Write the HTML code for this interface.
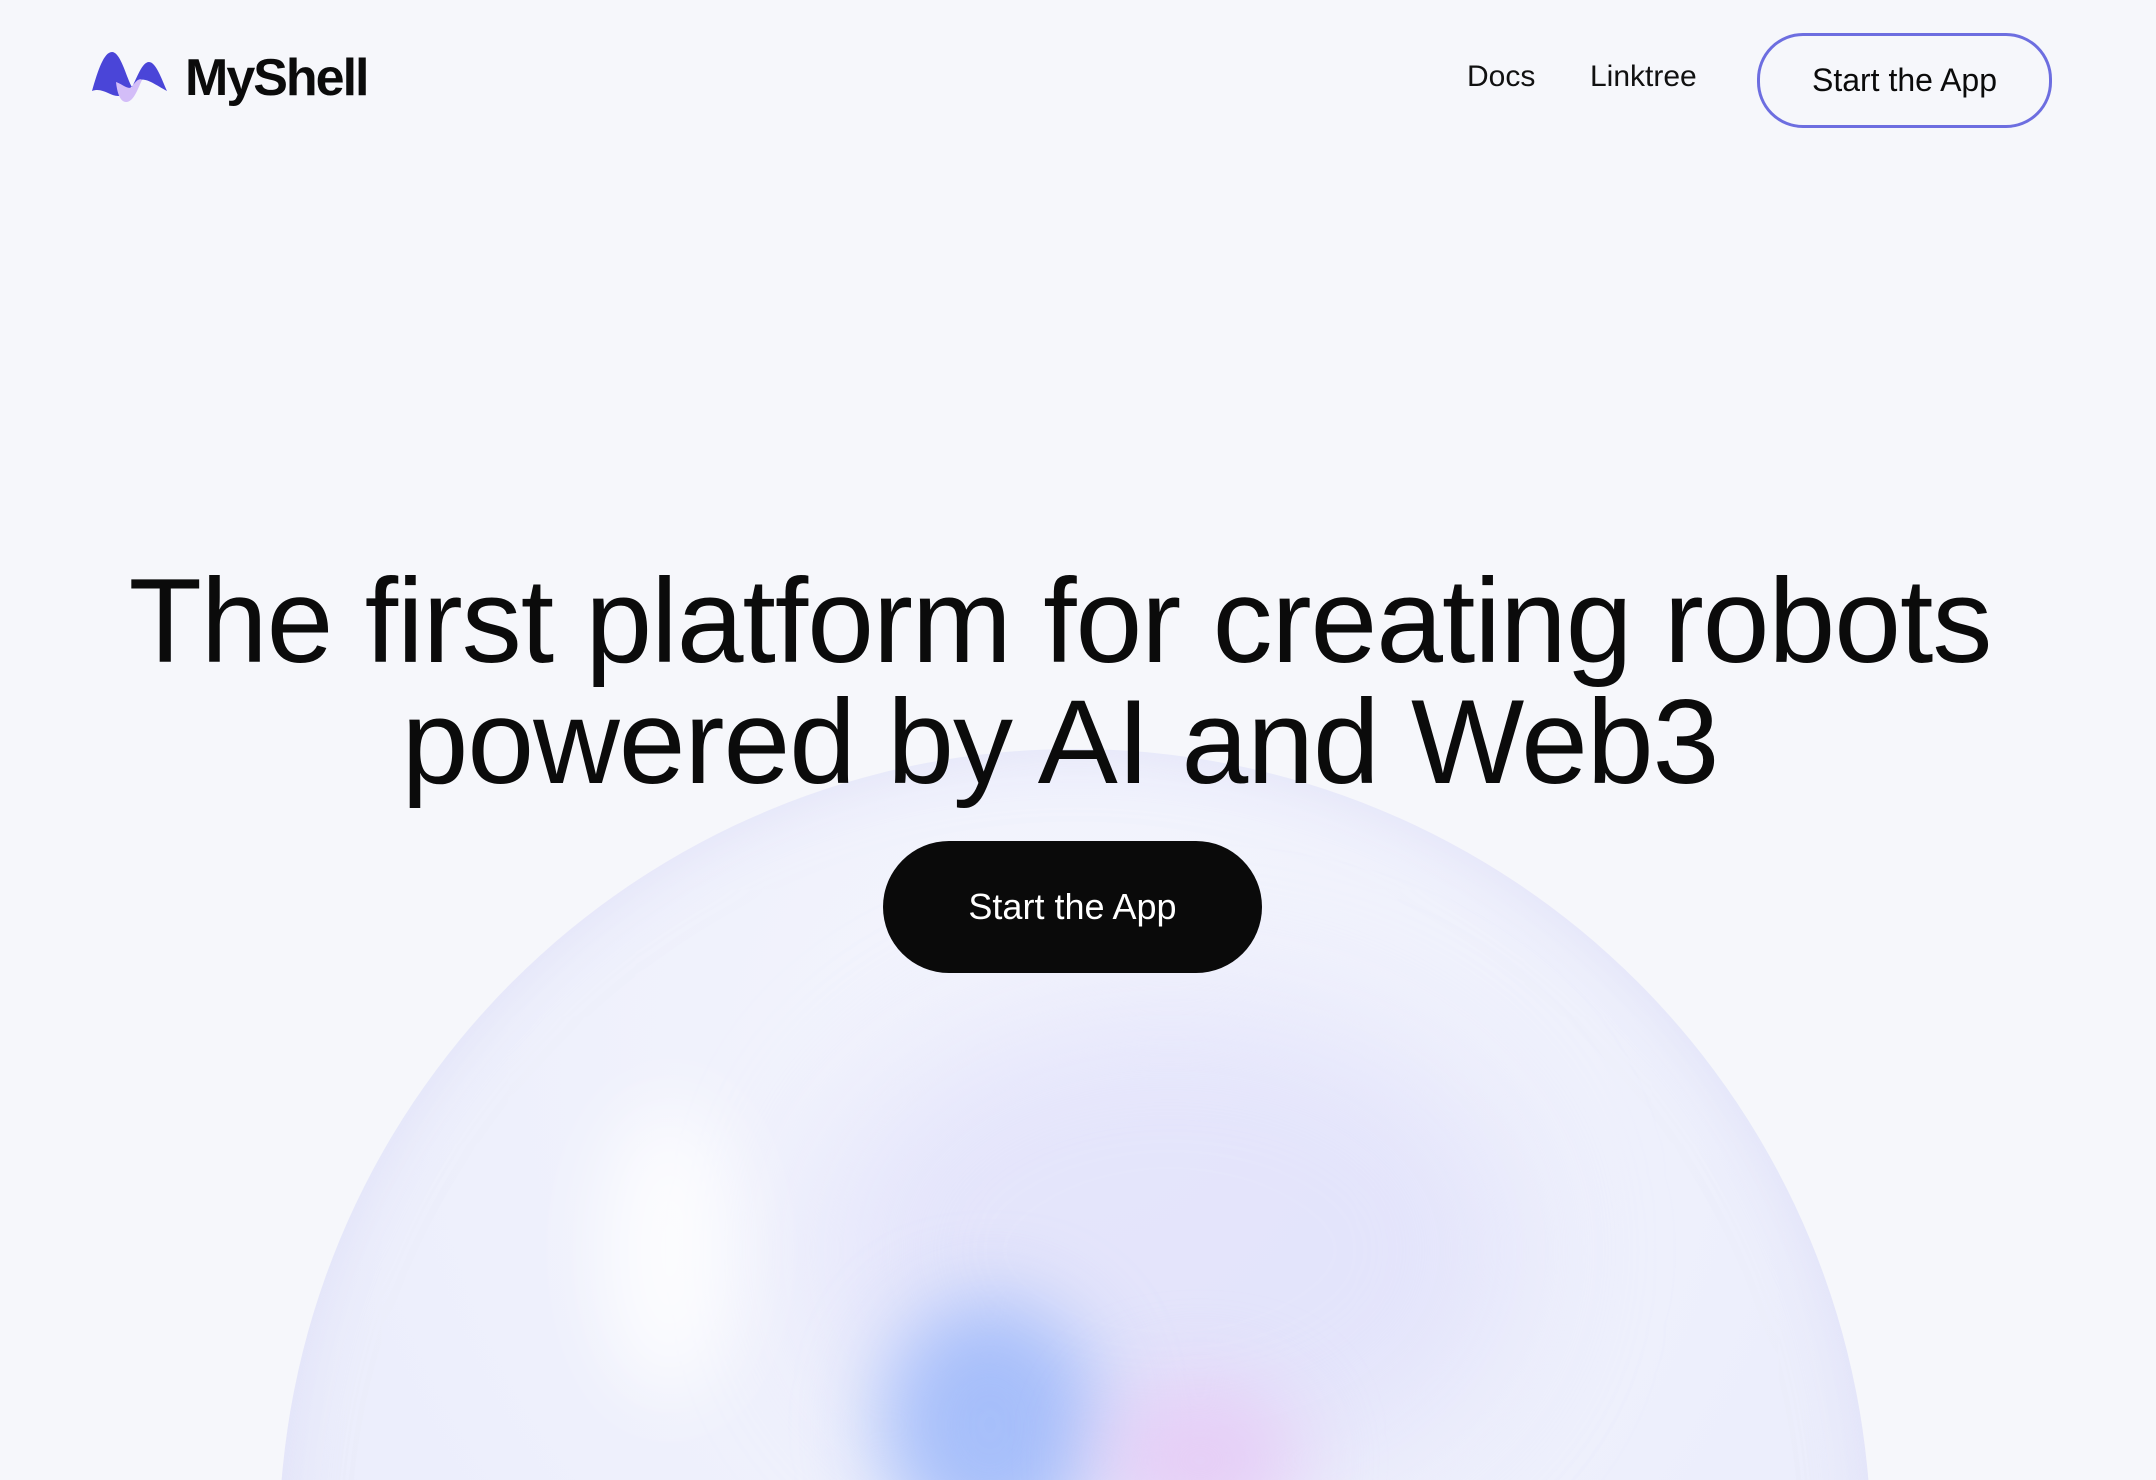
<!DOCTYPE html>
<html><head><meta charset="utf-8"><style>
html,body{margin:0;padding:0;width:2156px;height:1480px;overflow:hidden;background:#f6f7fb;font-family:"Liberation Sans",sans-serif;color:#0b0b0b}
#wrap{position:relative;width:2156px;height:1480px;overflow:hidden}
#bg{position:absolute;left:0;top:700px;width:2156px;height:780px;overflow:hidden}
.sphere{position:absolute;left:279px;top:49px;width:1592px;height:1592px;border-radius:50%;
background:radial-gradient(circle at 50% 20%,#f4f5fd 0%,#eef0fc 40%,#e9ebfb 70%,#eef0fb 100%);
box-shadow:inset 0 0 60px rgba(210,210,245,.5)}
.blob{position:absolute;border-radius:50%;filter:blur(40px)}
.nav a{position:absolute;font-size:30px;color:#111;text-decoration:none}
h1{position:absolute;left:-18px;width:2156px;top:561px;margin:0;text-align:center;font-weight:400;font-size:120px;line-height:121px;letter-spacing:-1px}
.btn2{position:absolute;left:883px;top:841px;width:379px;height:132px;border-radius:66px;background:#0a0a0a;color:#fff;font-size:36px;display:flex;align-items:center;justify-content:center}
.btn1{position:absolute;left:1757px;top:33px;width:289px;height:89px;border-radius:46px;border:3px solid #6d6ee0;font-size:32px;display:flex;align-items:center;justify-content:center;background:#f6f7fb}
</style></head><body><div id="wrap">
<div id="bg">
<div class="sphere"></div>
<div class="blob" style="left:820px;top:300px;width:700px;height:500px;background:rgba(218,218,250,.6);filter:blur(70px)"></div>
<div class="blob" style="left:880px;top:600px;width:220px;height:250px;background:rgba(150,180,250,.8)"></div>
<div class="blob" style="left:1100px;top:680px;width:200px;height:160px;background:rgba(230,200,245,.8)"></div>
<div class="blob" style="left:600px;top:400px;width:140px;height:300px;background:rgba(255,255,255,.8)"></div>
</div>
<svg style="position:absolute;left:92px;top:50px" width="76" height="54" viewBox="0 0 76 54">
<path d="M0 41 C6 20 12 2 20 2 C29 2 35 30 40 37 C45 28 50 12 57 12 C64 12 70 30 75 41 C62 34 55 28 47 30 C40 34 34 46 26 46 C18 46 10 37 0 41Z" fill="#4a45d8"/>
<path d="M24 32 C30 34 36 40 40 37 C44 30 48 28 50 30 C46 38 42 52 34 52 C28 52 25 42 24 32Z" fill="#d3bdf8"/>
</svg>
<div style="position:absolute;left:185px;top:48px;font-size:52px;font-weight:700;letter-spacing:-2px">MyShell</div>
<div class="nav"><a style="left:1467px;top:60px">Docs</a><a style="left:1590px;top:60px">Linktree</a></div>
<div class="btn1">Start the App</div>
<h1>The first platform for creating robots<br>powered by AI and Web3</h1>
<div class="btn2">Start the App</div>
</div></body></html>
